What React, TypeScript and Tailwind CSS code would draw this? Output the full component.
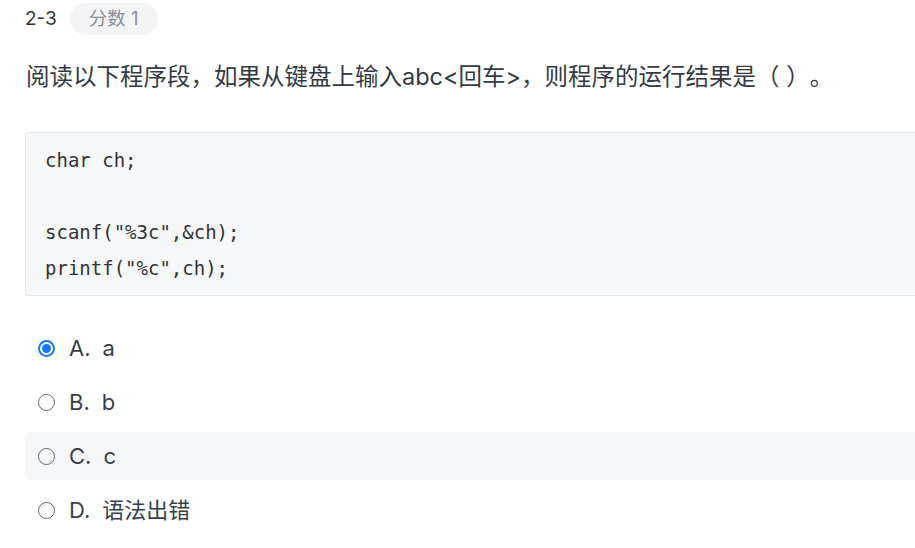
import React from 'react';

const FONT = "font-['Inter','Noto_Sans_CJK_SC',sans-serif]";

const options = [
    { key: 'A', text: 'a' },
    { key: 'B', text: 'b' },
    { key: 'C', text: 'c' },
    { key: 'D', text: '语法出错' },
];

const SELECTED = 'A';
const HOVERED = 'C';

function Radio({ checked }: { checked: boolean }) {
    if (checked) {
        return (
            <span className="w-[17px] h-[17px] rounded-full border-[2px] border-[#1677ff] flex items-center justify-center shrink-0">
                <span className="w-[9px] h-[9px] rounded-full bg-[#1677ff]"></span>
            </span>
        );
    }
    return <span className="w-[17px] h-[17px] rounded-full border-[1.5px] border-[#5f6368] shrink-0"></span>;
}

export default function App() {
    return (
        <div className={`${FONT} bg-white h-[548px] w-[915px] overflow-hidden text-[#333a45] [text-spacing-trim:space-all]`}>
            <div className="w-[1000px] pl-[25px]">
                {/* Header */}
                <div className="flex items-center gap-[13px] pt-[3px]">
                    <span className="text-[19px] text-[#333]">2-3</span>
                    <span className="h-8 px-[19px] rounded-full bg-[#f3f4f6] text-[#8a8f99] text-[18.5px] flex items-center">
                        分数 1
                    </span>
                </div>

                {/* Question */}
                <div className="mt-[25px] text-[23.5px] leading-[34px] pl-[1px]">
                    阅读以下程序段，如果从键盘上输入abc&lt;回车&gt;，则程序的运行结果是（ ）。
                </div>

                {/* Code */}
                <div className="mt-[38px] bg-[#f6f7f9] border border-[#e4e6ea] rounded-[3px] px-[19px] py-[9px]">
                    <pre className="font-['DejaVu_Sans_Mono',monospace] text-[19px] leading-9 text-[#333]">
{`char ch;

scanf("%3c",&ch);
printf("%c",ch);`}
                    </pre>
                </div>

                {/* Options */}
                <div className="mt-[28px] flex flex-col gap-[6px]">
                    {options.map(opt => (
                        <div
                            key={opt.key}
                            className={`h-12 flex items-center pl-[13px] rounded-md ${opt.key === HOVERED ? 'bg-[#f5f6f8]' : ''}`}
                        >
                            <Radio checked={opt.key === SELECTED} />
                            <span className="ml-[14px] text-[22px] text-[#3a3f47]">{opt.key}.</span>
                            <span className="ml-[12px] text-[22px] text-[#36404f]">{opt.text}</span>
                        </div>
                    ))}
                </div>
            </div>
        </div>
    );
}
